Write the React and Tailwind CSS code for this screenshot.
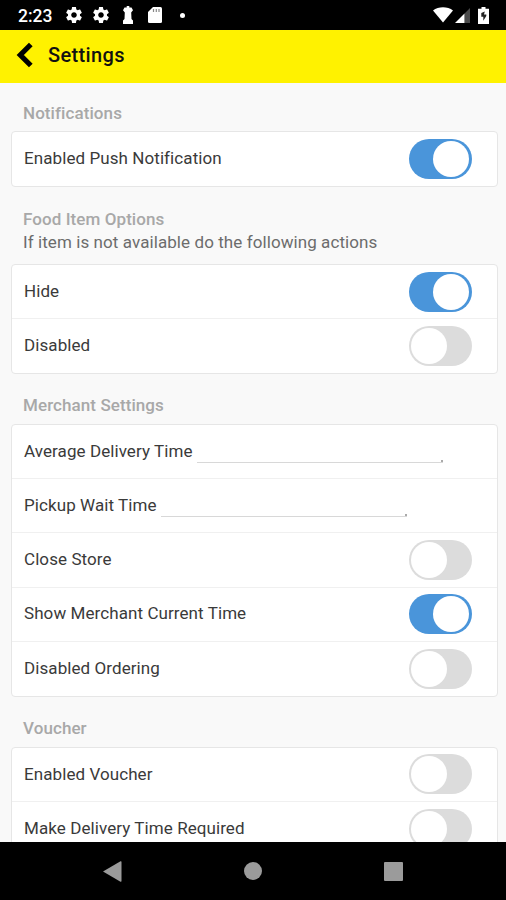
function Gear() {
  return (
    <svg viewBox="2 2 20 20" className="w-4 h-4" fill="#fff">
      <path d="M19.43 12.98c.04-.32.07-.64.07-.98s-.03-.66-.07-.98l2.11-1.65c.19-.15.24-.42.12-.64l-2-3.46c-.12-.22-.39-.3-.61-.22l-2.49 1c-.52-.4-1.08-.73-1.69-.98l-.38-2.65C14.46 2.18 14.25 2 14 2h-4c-.25 0-.46.18-.49.42l-.38 2.65c-.61.25-1.17.59-1.69.98l-2.49-1c-.23-.09-.49 0-.61.22l-2 3.46c-.13.22-.07.49.12.64l2.11 1.65c-.04.32-.07.65-.07.98s.03.66.07.98l-2.11 1.65c-.19.15-.24.42-.12.64l2 3.46c.12.22.39.3.61.22l2.49-1c.52.4 1.08.73 1.69.98l.38 2.65c.03.24.24.42.49.42h4c.25 0 .46-.18.49-.42l.38-2.65c.61-.25 1.17-.59 1.69-.98l2.49 1c.23.09.49 0 .61-.22l2-3.46c.12-.22.07-.49-.12-.64l-2.11-1.65zM12 15.5c-1.93 0-3.5-1.57-3.5-3.5s1.57-3.5 3.5-3.5 3.5 1.57 3.5 3.5-1.57 3.5-3.5 3.5z" />
    </svg>
  );
}

function StatusBar() {
  return (
    <div className="h-[29.5px] shrink-0 bg-black flex items-center pl-[18px] pr-[17px] pt-px">
      <span className="w-[48px] text-[17.5px] leading-none font-medium text-white pt-[2px]">2:23</span>
      <Gear />
      <div className="ml-[11px]"><Gear /></div>
      <svg viewBox="0 0 12 18" className="ml-[13px] w-3 h-[18px]" fill="#fff">
        <path d="M4.700 0h2.600v1.500h2.200l1.500 2.800-1.800 2.200.3 6.500 1.500 1.500v3.500H1v-3.500L2.500 13l.3-6.500L1 4.300l1.500-2.800h2.200z" />
      </svg>
      <svg viewBox="0 0 14 16" className="ml-[14px] w-[14px] h-4">
        <path d="M5 0h7.500Q14 0 14 1.500v13q0 1.500-1.500 1.500h-11Q0 16 0 14.500V5z" fill="#fff" />
        <path d="M5.500 2v3M8.300 2v3M11 2v3" stroke="#888" strokeWidth="1.2" />
      </svg>
      <span className="ml-[18px] w-[5px] h-[5px] rounded-full bg-white" />
      {/* Wifi, signal and battery */}
      <svg viewBox="0 0 20 16" className="ml-auto w-5 h-4" fill="#fff">
        <path d="M0 3.500C5.500-.9 14.500-.9 20 3.500L10 15.500z" />
      </svg>
      <svg viewBox="0 0 16 16" className="ml-[2px] w-4 h-4">
        <path d="M15 1v15h-3.700V4.700zM9.500 6.500 11.300 4.700V16H9.500z" fill="#4a4a4a" />
        <path d="M9.500 6.500V16H0z" fill="#fff" />
      </svg>
      <svg viewBox="0 0 11 17" className="ml-[7px] w-[11px] h-[17px]">
        <path d="M3.500 0h4v1.700H11V17H0V1.700h3.500z" fill="#fff" />
        <path d="M6.800 4.500 3.300 6v3.700h2v4L8.300 9V7.500H6z" fill="#222" />
      </svg>
    </div>
  );
}

function Toggle({ on }) {
  return (
    <div className={`w-[63px] h-[40px] rounded-full pl-[2px] pr-[3px] flex items-center ${on ? "bg-[#4a95da] justify-end" : "bg-[#dcdcdc]"}`}>
      <div className="w-[36px] h-[36px] rounded-full bg-white" />
    </div>
  );
}

function Row({ label, type = "toggle", on }) {
  return (
    <div className="h-[54.1px] shrink-0 flex items-center pl-3 pr-[25px] border-b border-[#f0f0f0] last:border-b-0">
      <span className="text-[17px] tracking-[0.08px] text-[#3a3a3a] whitespace-nowrap">{label}</span>
      {type === "input" ? (
        <div className="ml-1 mt-[17px] w-[246px] h-[5px] border-b border-[#d8d8d8] flex justify-end items-end">
          <span className="w-[2px] h-[2px] bg-[#aaa]" />
        </div>
      ) : (
        <div className="ml-auto"><Toggle on={on} /></div>
      )}
    </div>
  );
}

function Card({ children }) {
  return (
    <div className="ml-[11px] mr-2 bg-white border border-[#e6e6e6] rounded-[4px]">{children}</div>
  );
}

function Heading({ children }) {
  return (
    <h2 className="pl-[23px] text-[17px] leading-[24px] tracking-[0.08px] font-medium text-[#a8a8a8]">{children}</h2>
  );
}

export default function App() {
  return (
    <div className="w-[506px] h-[900px] flex flex-col overflow-hidden bg-[#f9f9f9] font-['Roboto',sans-serif]">
      <StatusBar />
      <header className="h-[53px] shrink-0 bg-[#fff200] flex items-center pl-4 pb-[3px]">
        <svg viewBox="0 0 17 26" className="w-[17px] h-[26px]" fill="none">
          <path d="M14.800 2.500 4.300 13l10.500 10.500" stroke="#000" strokeWidth="5.200" />
        </svg>
        <h1 className="ml-[15px] text-[20px] tracking-[0.35px] font-medium text-[#111]">Settings</h1>
      </header>

      <main className="h-[759.5px] shrink-0 overflow-hidden">
        <div className="pt-[18px] pb-[6.5px]"><Heading>Notifications</Heading></div>
        <Card>
          <Row label="Enabled Push Notification" on />
        </Card>

        <div className="pt-[20px] pb-[10px]">
          <Heading>Food Item Options</Heading>
          <p className="pl-[23px] text-[17px] leading-[23px] tracking-[0.08px] text-[#6c6c6c]">
            If item is not available do the following actions
          </p>
        </div>
        <Card>
          <Row label="Hide" on />
          <Row label="Disabled" />
        </Card>

        <div className="pt-[19px] pb-[7px]"><Heading>Merchant Settings</Heading></div>
        <Card>
          <Row label="Average Delivery Time" type="input" />
          <Row label="Pickup Wait Time" type="input" />
          <Row label="Close Store" />
          <Row label="Show Merchant Current Time" on />
          <Row label="Disabled Ordering" />
        </Card>

        <div className="pt-[19px] pb-[7px]"><Heading>Voucher</Heading></div>
        <Card>
          <Row label="Enabled Voucher" />
          <Row label="Make Delivery Time Required" />
        </Card>
      </main>

      {/* Android navigation */}
      <nav className="h-[58px] shrink-0 bg-black flex items-center pl-[103px] pr-[103px] justify-between">
        <svg viewBox="0 0 19 21" className="w-[19px] h-[21px]" fill="#9b9b9b">
          <path d="M0 10.500 17.500.3q1-.3 1 .7v19q0 1-1 .7z" />
        </svg>
        <span className="w-[18px] h-[18px] rounded-full bg-[#9b9b9b]" />
        <span className="w-[19px] h-[19px] rounded-[1px] bg-[#9b9b9b]" />
      </nav>
    </div>
  );
}
